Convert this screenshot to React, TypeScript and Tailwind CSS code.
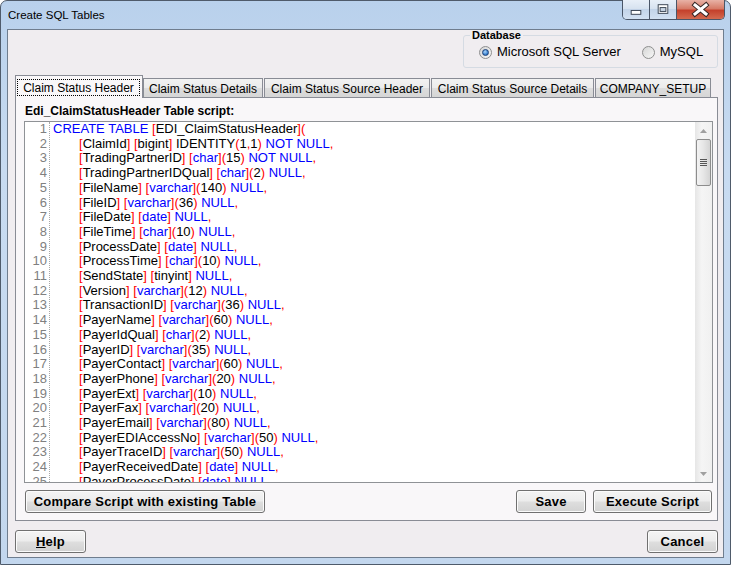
import React from "react"

const LINES = [
  "CREATE TABLE [EDI_ClaimStatusHeader](",
  "[ClaimId] [bigint] IDENTITY(1,1) NOT NULL,",
  "[TradingPartnerID] [char](15) NOT NULL,",
  "[TradingPartnerIDQual] [char](2) NULL,",
  "[FileName] [varchar](140) NULL,",
  "[FileID] [varchar](36) NULL,",
  "[FileDate] [date] NULL,",
  "[FileTime] [char](10) NULL,",
  "[ProcessDate] [date] NULL,",
  "[ProcessTime] [char](10) NULL,",
  "[SendState] [tinyint] NULL,",
  "[Version] [varchar](12) NULL,",
  "[TransactionID] [varchar](36) NULL,",
  "[PayerName] [varchar](60) NULL,",
  "[PayerIdQual] [char](2) NULL,",
  "[PayerID] [varchar](35) NULL,",
  "[PayerContact] [varchar](60) NULL,",
  "[PayerPhone] [varchar](20) NULL,",
  "[PayerExt] [varchar](10) NULL,",
  "[PayerFax] [varchar](20) NULL,",
  "[PayerEmail] [varchar](80) NULL,",
  "[PayerEDIAccessNo] [varchar](50) NULL,",
  "[PayerTraceID] [varchar](50) NULL,",
  "[PayerReceivedDate] [date] NULL,",
  "[PayerProcessDate] [date] NULL,",
]

const BLUE = new Set(["CREATE", "TABLE", "NOT", "NULL", "char", "varchar", "date"])

function SqlLine({ text }: { text: string }) {
  const tokens = text.match(/\[|\]|\(|\)|,|[A-Za-z_]+|\d+|\s+/g) ?? []
  return (
    <>
      {tokens.map((t, i) => {
        if ("[](),".includes(t)) return <span key={i} className="text-[#ff0000]">{t}</span>
        if (BLUE.has(t)) return <span key={i} className="text-[#0000ff]">{t}</span>
        return <span key={i}>{t}</span>
      })}
    </>
  )
}

const btn =
  "flex h-[23px] items-center justify-center rounded-[3px] border border-[#707070] bg-[linear-gradient(to_bottom,#f4f4f4_0%,#ececec_48%,#dedede_52%,#d2d2d2_100%)] shadow-[inset_0_0_0_1px_#fbfbfb] text-[13px] font-bold leading-[15px] tracking-[0.2px] text-black"

function Radio({ checked }: { checked?: boolean }) {
  return (
    <span className="flex h-[13px] w-[13px] items-center justify-center rounded-full border border-[#8e8f8f] bg-[linear-gradient(135deg,#d6d6d6,#f7f7f7)]">
      {checked && (
        <span className="h-[7px] w-[7px] rounded-full border border-[#1c3f78] bg-[radial-gradient(circle_at_40%_35%,#a9d4fb,#2f78c8_70%)]" />
      )}
    </span>
  )
}

function CaptionButtons() {
  return (
    <div className="-mr-px -mt-px flex h-[20px] overflow-hidden rounded-b-[5px] border border-t-0 border-[#4a5668]">
      <div className="flex w-[27px] items-center justify-center border-r border-[#4a5668] bg-[linear-gradient(to_bottom,#e8eff8_0%,#d5e1ef_50%,#c3d4e9_50%,#d2e1f2_100%)]">
        <svg width="27" height="19" viewBox="0 0 27 19">
          <rect x="8.5" y="10.5" width="10" height="4" fill="#fff" stroke="#3b4553" />
        </svg>
      </div>
      <div className="flex w-[27px] items-center justify-center border-r border-[#4a5668] bg-[linear-gradient(to_bottom,#e8eff8_0%,#d5e1ef_50%,#c3d4e9_50%,#d2e1f2_100%)]">
        <svg width="27" height="19" viewBox="0 0 27 19">
          <rect x="8.5" y="4.5" width="10" height="9" fill="#fff" stroke="#3b4553" />
          <rect x="10.5" y="7.5" width="6" height="4" fill="#c9d6e6" stroke="#3b4553" />
        </svg>
      </div>
      <div className="flex w-[47px] items-center justify-center bg-[linear-gradient(to_bottom,#e8b2a6_0%,#d67b68_45%,#c4412c_55%,#d36a4f_100%)]">
        <svg width="47" height="19" viewBox="0 0 47 19">
          <path d="M18 5 L29 14 M29 5 L18 14" stroke="#3a2a28" strokeWidth="5" strokeLinecap="square" />
          <path d="M18 5 L29 14 M29 5 L18 14" stroke="#fff" strokeWidth="3" strokeLinecap="square" />
        </svg>
      </div>
    </div>
  )
}

const TABS = [
  { label: "Claim Status Header", w: "w-[128px]" },
  { label: "Claim Status Details", w: "w-[120px]" },
  { label: "Claim Status Source Header", w: "ml-px w-[166px]" },
  { label: "Claim Status Source Details", w: "ml-px w-[163px]" },
  { label: "COMPANY_SETUP", w: "ml-px w-[116px]" },
]

export default function App() {
  return (
    <div className="h-[565px] w-[731px] bg-white font-['Liberation_Sans',Arial,sans-serif] text-black">
      <div className="flex h-full flex-col rounded-t-[7px] border border-[#4f5b6b] bg-[linear-gradient(to_bottom,#b9d1ec,#c8dbf1_30%,#c3d7ee)] px-[6px] pb-[6px]">
        {/* Title bar */}
        <div className="flex h-[28px] items-start justify-between">
          <span className="pl-px pt-[7px] text-[11.5px] leading-[14px]">Create SQL Tables</span>
          <CaptionButtons />
        </div>

        {/* Client area */}
        <div className="flex flex-1 flex-col border border-[#6f7d8e] bg-[#f0edf0] pb-[4px] pl-[7px] pr-[5px]">
          {/* Database group */}
          <fieldset className="ml-auto w-[255px] rounded-[3px] border border-[#d5dbe3] pb-[7px]">
            <legend className="ml-[6px] px-[2px] text-[11px] font-bold leading-[11px]">Database</legend>
            <div className="mt-[3px] flex h-[16px] items-center pl-[15px] text-[13px] leading-[16px]">
              <Radio checked />
              <span className="ml-[5px]">Microsoft SQL Server</span>
              <span className="ml-[21px]">
                <Radio />
              </span>
              <span className="ml-[5px]">MySQL</span>
            </div>
          </fieldset>

          {/* Tabs */}
          <div className="relative z-10 mt-[7px] flex h-[22px] items-end">
            {TABS.map((t, i) =>
              i === 0 ? (
                <div
                  key={t.label}
                  className={`${t.w} -mb-px flex h-[23px] items-start border border-b-0 border-[#898c95] bg-[#f9f7f9] px-[1px] pt-[3px]`}
                >
                  <span className="flex h-[17px] w-[123px] items-center justify-center border border-dotted border-black text-[12px] leading-[14px]">
                    {t.label}
                  </span>
                </div>
              ) : (
                <div
                  key={t.label}
                  className={`${t.w} flex h-[19px] items-center justify-center border border-b-0 border-[#898c95] bg-[linear-gradient(to_bottom,#f2f2f2_0%,#ebebeb_50%,#dddddd_50%,#d6d6d6_100%)] pt-px text-[12px] leading-[14px]`}
                >
                  {t.label}
                </div>
              )
            )}
          </div>

          {/* Tab panel */}
          <div className="flex flex-col border border-[#898c95] bg-[#f9f7f9] pb-[7px] pt-[6px]">
            <div className="pl-[9px] text-[12px] font-bold leading-[14px]">Edi_ClaimStatusHeader Table script:</div>

            {/* Editor */}
            <div className="ml-[8px] mr-[4px] mt-[3px] flex h-[362px] border border-[#8f9296] bg-white">
              <div className="flex flex-1 overflow-hidden text-[13px] leading-[14.7px]">
                <div className="w-[25px] shrink-0 border-r border-dotted border-[#a8a8a8] pr-[2px] text-right text-[#808080]">
                  {LINES.map((_, i) => (
                    <div key={i}>{i + 1}</div>
                  ))}
                </div>
                <div className="flex-1 pl-[3px]">
                  {LINES.map((l, i) => (
                    <div key={i} className={`whitespace-pre ${i > 0 ? "pl-[26px]" : ""}`}>
                      <SqlLine text={l} />
                    </div>
                  ))}
                </div>
              </div>

              {/* Scrollbar */}
              <div className="flex w-[17px] shrink-0 flex-col bg-[linear-gradient(to_right,#e6e6e6,#f5f5f5_40%,#f0f0f0)]">
                <div className="flex h-[17px] items-center justify-center">
                  <svg width="7" height="4" viewBox="0 0 7 4">
                    <path d="M0 4 L3.5 0 L7 4 Z" fill="#a0a0a0" />
                  </svg>
                </div>
                <div className="mx-px flex h-[47px] flex-col items-center justify-center gap-[1px] rounded-[2px] border border-[#8d8d8d] bg-[linear-gradient(to_right,#f3f3f3,#e6e6e6_50%,#d4d4d4)]">
                  <span className="h-px w-[7px] bg-[#555]" />
                  <span className="h-px w-[7px] bg-[#555]" />
                  <span className="h-px w-[7px] bg-[#555]" />
                  <span className="h-px w-[7px] bg-[#555]" />
                </div>
                <div className="flex-1" />
                <div className="flex h-[17px] items-center justify-center">
                  <svg width="7" height="4" viewBox="0 0 7 4">
                    <path d="M0 0 L3.5 4 L7 0 Z" fill="#a0a0a0" />
                  </svg>
                </div>
              </div>
            </div>

            {/* Panel buttons */}
            <div className="mt-[7px] flex pl-[9px] pr-[5px]">
              <button className={`${btn} w-[240px]`}>Compare Script with existing Table</button>
              <button className={`${btn} ml-auto w-[70px]`}>Save</button>
              <button className={`${btn} ml-[7px] w-[119px]`}>Execute Script</button>
            </div>
          </div>

          {/* Dialog buttons */}
          <div className="mt-[9px] flex justify-between">
            <button className={`${btn} w-[71px]`}>
              <span>
                <span className="underline">H</span>elp
              </span>
            </button>
            <button className={`${btn} w-[71px]`}>Cancel</button>
          </div>
        </div>
      </div>
    </div>
  )
}
